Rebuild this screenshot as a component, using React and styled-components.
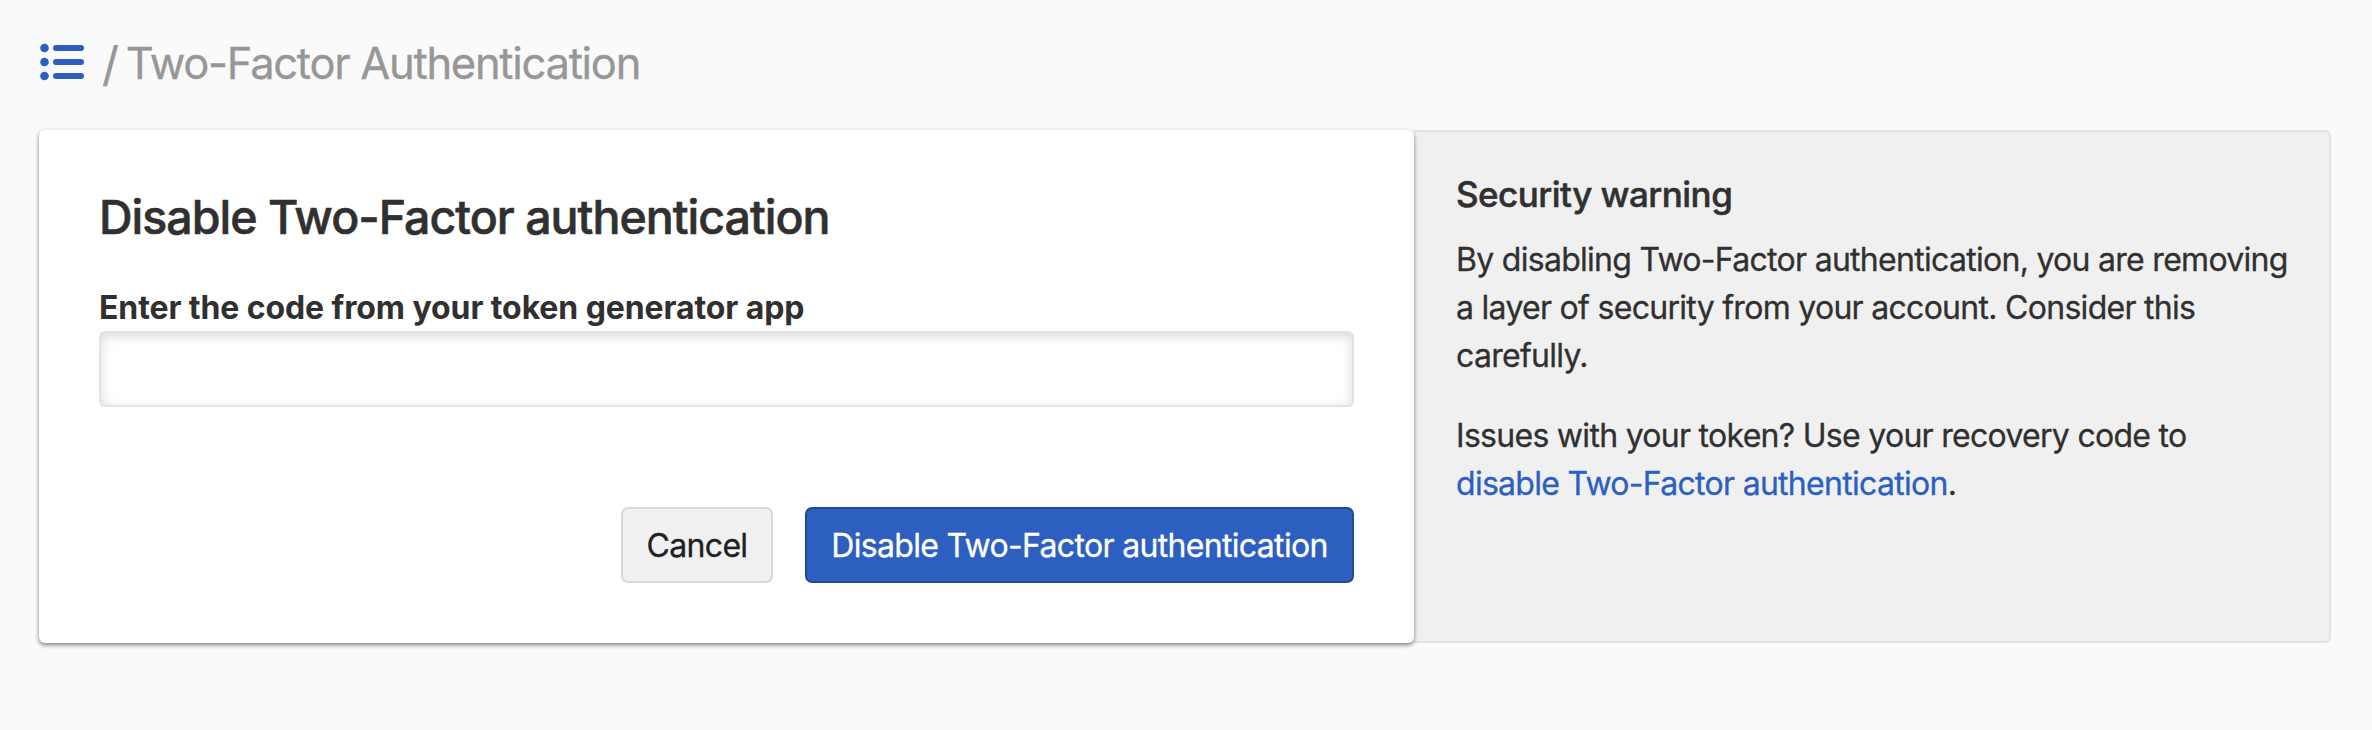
import React from "react";
import styled, { createGlobalStyle } from "styled-components";

const GlobalStyle = createGlobalStyle`
  *, *::before, *::after { box-sizing: border-box; }
  body {
    margin: 0;
    background: #fafafa;
    color: #303030;
    font-family: Inter, "Liberation Sans", sans-serif;
    font-size: 32px;
    font-weight: 400;
    line-height: 48px;
    -webkit-font-smoothing: antialiased;
    -webkit-text-stroke: 0.3px currentColor;
  }
`;

const Page = styled.main`
  min-height: 730px;
  padding: 34px 41px 0 39px;
`;

const Breadcrumb = styled.nav`
  display: flex;
  align-items: center;
  height: 56px;
  color: #979797;
  font-size: 43.5px;
  line-height: 56px;
  letter-spacing: -1.28px;
  white-space: nowrap;
`;

const ListIcon = styled.svg`
  width: 46px;
  height: 38px;
  flex: none;
`;

const Separator = styled.span`
  margin: 4px 8px 0 17px;
  font-size: 47px;
`;

const Crumb = styled.span`
  margin-top: 2px;
`;

const Panels = styled.div`
  display: flex;
  align-items: stretch;
  margin-top: 40px;
`;

const Card = styled.section`
  z-index: 1;
  width: 1375px;
  height: 513px;
  padding: 59px 60px;
  border-radius: 6px;
  background: #fff;
  box-shadow: 0 2px 4px rgba(0, 0, 0, 0.5);
`;

const Title = styled.h1`
  margin: 0;
  font-size: 46.5px;
  font-weight: 500;
  line-height: 56px;
  letter-spacing: -1px;
  -webkit-text-stroke: 0.6px currentColor;
`;

const Label = styled.label`
  display: block;
  margin-top: 39px;
  font-weight: 700;
  letter-spacing: -0.1px;
  -webkit-text-stroke: 0;
`;

const CodeInput = styled.input`
  display: block;
  width: 100%;
  height: 76px;
  margin-top: -1px;
  padding: 0 16px;
  border: 2px solid #e2e2e2;
  border-radius: 6px;
  outline: none;
  background: #fff;
  box-shadow: inset 0 3px 12px rgba(0, 0, 0, 0.15);
  font: inherit;
`;

const Actions = styled.div`
  display: flex;
  justify-content: flex-end;
  gap: 32px;
  margin-top: 100px;
`;

const Button = styled.button`
  width: ${(p) => (p.$primary ? 549 : 152)}px;
  height: 76px;
  padding: 1px 0 0;
  border: 2px solid ${(p) => (p.$primary ? "#224a93" : "#d8d8d8")};
  border-radius: 7px;
  background: ${(p) => (p.$primary ? "#2c5fc0" : "#f0f0f0")};
  color: ${(p) => (p.$primary ? "#fff" : "#202020")};
  font: inherit;
  letter-spacing: -0.67px;
  white-space: nowrap;
`;

const Aside = styled.aside`
  flex: 1;
  padding: 38px 0 0 42px;
  border: 2px solid #e3e3e3;
  border-left: 0;
  border-radius: 0 6px 6px 0;
  background: #f0f0f0;
  letter-spacing: -0.71px;
`;

const WarningTitle = styled.h2`
  margin: 0;
  font-size: 35px;
  font-weight: 500;
  line-height: 48px;
  letter-spacing: -0.53px;
  -webkit-text-stroke: 0.5px currentColor;
`;

const Paragraph = styled.p`
  margin: 18px 0 32px;
  white-space: nowrap;
  & + & { margin-top: 0; }
`;

const Link = styled.a`
  color: #2c5fc0;
  text-decoration: none;
  -webkit-text-stroke-color: #2c5fc0;
`;

export default function App() {
  return (
    <>
      <GlobalStyle />
      <Page>
        <Breadcrumb>
          <ListIcon viewBox="0 0 46 38" fill="#2c5fc0">
            {[5, 19, 33].map((y) => (
              <g key={y}>
                <circle cx="5.5" cy={y} r="4.3" />
                <rect x="14" y={y - 3} width="31" height="6" rx="3" />
              </g>
            ))}
          </ListIcon>
          <Separator>/</Separator>
          <Crumb>Two-Factor Authentication</Crumb>
        </Breadcrumb>
        <Panels>
          <Card>
            <Title>Disable Two-Factor authentication</Title>
            <Label htmlFor="code">Enter the code from your token generator app</Label>
            <CodeInput id="code" type="text" />
            <Actions>
              <Button type="button">Cancel</Button>
              <Button type="button" $primary>Disable Two-Factor authentication</Button>
            </Actions>
          </Card>
          <Aside>
            <WarningTitle>Security warning</WarningTitle>
            <Paragraph>
              By disabling Two-Factor authentication, you are removing<br />
              a layer of security from your account. Consider this<br />
              carefully.
            </Paragraph>
            <Paragraph>
              Issues with your token? Use your recovery code to<br />
              <Link>disable Two-Factor authentication</Link>.
            </Paragraph>
          </Aside>
        </Panels>
      </Page>
    </>
  );
}
